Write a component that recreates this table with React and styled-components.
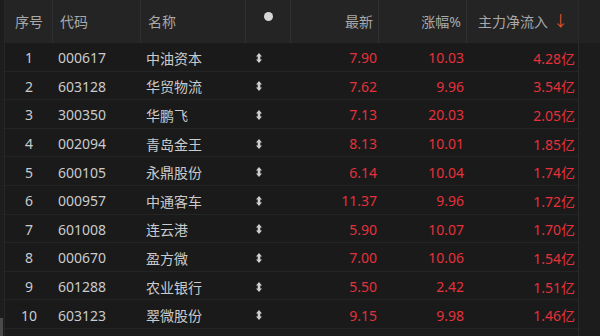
import React from "react";
import styled, { createGlobalStyle } from "styled-components";

const GlobalStyle = createGlobalStyle`
  html, body {
    margin: 0;
    padding: 0;
    background: #1b1b1b;
  }
  body {
    font-family: "Noto Sans", "Noto Sans CJK SC", sans-serif;
  }
`;

const rows = [
  [1, "000617", "中油资本", "7.90", "10.03", "4.28亿"],
  [2, "603128", "华贸物流", "7.62", "9.96", "3.54亿"],
  [3, "300350", "华鹏飞", "7.13", "20.03", "2.05亿"],
  [4, "002094", "青岛金王", "8.13", "10.01", "1.85亿"],
  [5, "600105", "永鼎股份", "6.14", "10.04", "1.74亿"],
  [6, "000957", "中通客车", "11.37", "9.96", "1.72亿"],
  [7, "601008", "连云港", "5.90", "10.07", "1.70亿"],
  [8, "000670", "盈方微", "7.00", "10.06", "1.54亿"],
  [9, "601288", "农业银行", "5.50", "2.42", "1.51亿"],
  [10, "603123", "翠微股份", "9.15", "9.98", "1.46亿"],
];

const COLS = "48px 88px 105px 45px 88px 88px 111px";

const Page = styled.div`
  display: flex;
  width: 600px;
  height: 336px;
  overflow: hidden;
`;

const Gutter = styled.div`
  width: 4px;
  display: flex;
  flex-direction: column;
  justify-content: flex-end;
  background: #1d1d1d;
  border-right: 1px solid #262626;
`;

const Thumb = styled.div`
  width: 3px;
  height: 18px;
  background: #4a4a4a;
`;

const Table = styled.div`
  width: 573px;
  display: flex;
  flex-direction: column;
`;

const HeaderRow = styled.div`
  display: grid;
  grid-template-columns: ${COLS};
  height: 43px;
  background: #242424;
`;

const HeadCell = styled.div`
  display: flex;
  align-items: center;
  justify-content: ${(p) => p.$align || "flex-start"};
  padding: 0 ${(p) => p.$pr || 0}px 2px ${(p) => p.$pl || 0}px;
  font-size: 14px;
  color: #a9a9a9;
  border-right: 1px solid #2f2f2f;
  &:last-child {
    border-right: none;
  }
`;

const Dot = styled.span`
  width: 9px;
  height: 9px;
  border-radius: 50%;
  background: #d6d6d6;
  margin-bottom: 8px;
`;

const Arrow = styled.span`
  color: #e4512f;
  font-size: 15px;
  margin-left: 5px;
  line-height: 1;
`;

const Row = styled.div`
  display: grid;
  grid-template-columns: ${COLS};
  height: 28.6px;
  box-sizing: border-box;
  background: #1a1a1a;
  border-bottom: 1px solid #242424;
`;

const Cell = styled.div`
  display: flex;
  align-items: center;
  justify-content: ${(p) => p.$align || "flex-start"};
  padding: 2px ${(p) => p.$pr || 0}px 0 ${(p) => p.$pl || 0}px;
  font-size: 14px;
  color: ${(p) => (p.$red ? "#e4313b" : "#c9cbcd")};
  white-space: nowrap;
`;

const RightGutter = styled.div`
  flex: 1;
  display: flex;
  flex-direction: column;
  background: #1c1c1c;
  border-left: 1px solid #2a2a2a;
`;

const RightHead = styled.div`
  height: 43px;
  background: #222222;
`;

const SortIcon = () => (
  <svg width="6" height="10" viewBox="0 0 6 10">
    <path d="M3 0 L6 3.5 L4.3 3.5 L4.3 6.5 L6 6.5 L3 10 L0 6.5 L1.7 6.5 L1.7 3.5 L0 3.5 Z" fill="#cfcfcf" />
  </svg>
);

export default function App() {
  return (
    <>
      <GlobalStyle />
      <Page>
        <Gutter>
          <Thumb />
        </Gutter>
        <Table>
          <HeaderRow>
            <HeadCell $pl={10}>序号</HeadCell>
            <HeadCell $pl={7}>代码</HeadCell>
            <HeadCell $pl={7}>名称</HeadCell>
            <HeadCell $align="center">
              <Dot />
            </HeadCell>
            <HeadCell $align="flex-end" $pr={5}>最新</HeadCell>
            <HeadCell $align="flex-end" $pr={5}>涨幅%</HeadCell>
            <HeadCell $align="flex-end" $pr={10}>
              主力净流入<Arrow>↓</Arrow>
            </HeadCell>
          </HeaderRow>
          {rows.map((r) => (
            <Row key={r[0]}>
              <Cell $align="center">{r[0]}</Cell>
              <Cell $pl={5}>{r[1]}</Cell>
              <Cell $pl={5}>{r[2]}</Cell>
              <Cell $pl={10}>
                <SortIcon />
              </Cell>
              <Cell $align="flex-end" $pr={2} $red>{r[3]}</Cell>
              <Cell $align="flex-end" $pr={3} $red>{r[4]}</Cell>
              <Cell $align="flex-end" $pr={3} $red>{r[5]}</Cell>
            </Row>
          ))}
        </Table>
        <RightGutter>
          <RightHead />
        </RightGutter>
      </Page>
    </>
  );
}
